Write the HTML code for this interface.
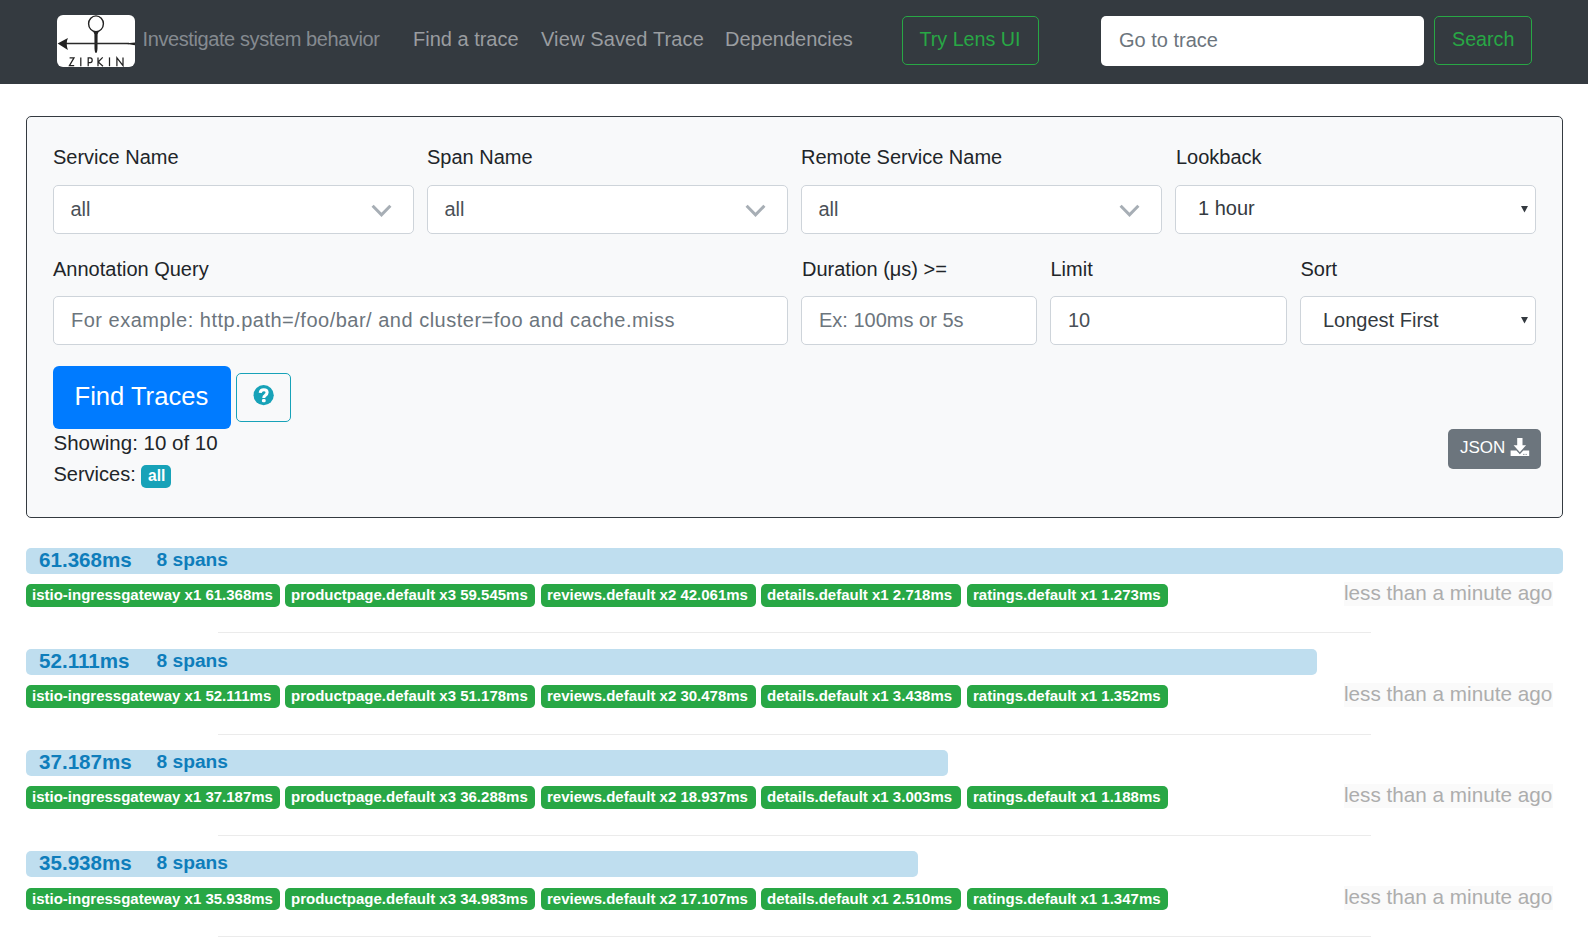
<!DOCTYPE html>
<html><head><meta charset="utf-8">
<style>
*{box-sizing:border-box;margin:0;padding:0}
html,body{width:1588px;height:944px;overflow:hidden;background:#fff}
body{font-family:"Liberation Sans",sans-serif;position:relative;color:#212529}
.a{position:absolute;white-space:nowrap;line-height:1}
.t20{font-size:20px}
#hdr{position:absolute;left:0;top:0;width:1588px;height:84px;background:#343a40}
.nav{color:#9a9da0;font-size:20px}
.gbtn{position:absolute;border:1px solid #28a745;border-radius:5px}
.gtxt{color:#28a745;font-size:20px}
#panel{position:absolute;left:26px;top:116px;width:1537px;height:402px;background:#f8f9fa;border:1px solid #343a40;border-radius:5px}
.lbl{font-size:20px;color:#212529}
.fc{position:absolute;background:#fff;border:1px solid #ced4da;border-radius:5px;height:49px}
.val{font-size:20px;color:#495057}
.ph{font-size:20px;color:#6c757d}
.bar{position:absolute;left:26px;height:26px;background:#bfdeef;border-radius:5px}
.dur{font-size:20px;font-weight:bold;color:#0e7dbb}
.bd{position:absolute;height:23px;background:#28a745;border-radius:5px}
.bdt{font-size:15px;font-weight:bold;color:#fff}
.ago{position:absolute;left:1344px;width:209px;height:24px;background:#fafafa}
.agot{font-size:20px;color:#adadad}
.hr{position:absolute;left:218px;width:1153px;height:1px;background:#ebebeb}
</style></head>
<body>
<div id="hdr">
  <svg style="position:absolute;left:57px;top:15px" width="78" height="52" viewBox="0 0 78 52">
    <rect x="0" y="0" width="78" height="52" rx="6" fill="#fff"/>
    <ellipse cx="39" cy="8.8" rx="7.4" ry="7.9" fill="none" stroke="#222" stroke-width="1.4"/>
    <path d="M35.8 15.6 Q39 18.2 42.2 15.6 L40.6 19.2 L40.5 33.5 Q40.2 38 39 38 Q37.8 38 37.5 33.5 L37.4 19.2 Z" fill="#222"/>
    <path d="M4 28.4 L72 28.4" stroke="#2a2a2a" stroke-width="1.55"/>
    <path d="M0.6 28.4 L10.9 23 Q8.6 28.4 10.9 35.1 Z" fill="#222"/>
    <path d="M67 28.6 L78 27.4 L78 30.2 Z" fill="#222"/>
    <g fill="none" stroke="#222" stroke-width="1.25" stroke-linejoin="miter">
      <path d="M12.6 42.9 L17 42.9 L12.4 50.6 L17.2 50.6"/>
      <path d="M23.8 42.4 L23.8 51.2"/>
      <path d="M31.2 51.2 L31.2 42.9 L33.2 42.9 Q35.2 42.9 35.2 45.2 Q35.2 47.5 33.2 47.5 L31.2 47.5"/>
      <path d="M41 42.4 L41 51.2 M45.7 42.4 L41.2 47 L46 51.2"/>
      <path d="M52.5 42.4 L52.5 51.2"/>
      <path d="M59.9 51.2 L59.9 42.8 L66 50.6 L66 42.4"/>
    </g>
  </svg>
  <span class="a nav" style="left:142.5px;top:29px;color:#858a90;font-size:20px;letter-spacing:-0.4px">Investigate system behavior</span>
  <span class="a nav" style="left:413px;top:29px">Find a trace</span>
  <span class="a nav" style="left:541px;top:29px;letter-spacing:0.13px">View Saved Trace</span>
  <span class="a nav" style="left:725px;top:29px">Dependencies</span>
  <div class="gbtn" style="left:902px;top:16px;width:137px;height:49px"></div>
  <span class="a gtxt" style="left:919.5px;top:30px;font-size:19.7px">Try Lens UI</span>
  <div style="position:absolute;left:1101px;top:16px;width:323px;height:50px;background:#fff;border-radius:5px"></div>
  <span class="a ph" style="left:1119px;top:30px">Go to trace</span>
  <div class="gbtn" style="left:1434px;top:16px;width:98px;height:49px"></div>
  <span class="a gtxt" style="left:1452px;top:30px;font-size:19.7px">Search</span>
</div>

<div id="panel"></div>
<span class="a lbl" style="left:53px;top:147px">Service Name</span>
<span class="a lbl" style="left:427px;top:147px">Span Name</span>
<span class="a lbl" style="left:801px;top:147px">Remote Service Name</span>
<span class="a lbl" style="left:1176px;top:147px">Lookback</span>

<div class="fc" style="left:53px;top:185px;width:361px"></div>
<span class="a val" style="left:70.5px;top:199px">all</span>
<svg class="a" style="left:371px;top:204px" width="21" height="14" viewBox="0 0 21 14"><path d="M1.6 1.8 L10.5 10.9 L19.4 1.8" fill="none" stroke="#a7aeb5" stroke-width="3"/></svg>
<div class="fc" style="left:427px;top:185px;width:361px"></div>
<span class="a val" style="left:444.5px;top:199px">all</span>
<svg class="a" style="left:745px;top:204px" width="21" height="14" viewBox="0 0 21 14"><path d="M1.6 1.8 L10.5 10.9 L19.4 1.8" fill="none" stroke="#a7aeb5" stroke-width="3"/></svg>
<div class="fc" style="left:801px;top:185px;width:361px"></div>
<span class="a val" style="left:818.5px;top:199px">all</span>
<svg class="a" style="left:1119px;top:204px" width="21" height="14" viewBox="0 0 21 14"><path d="M1.6 1.8 L10.5 10.9 L19.4 1.8" fill="none" stroke="#a7aeb5" stroke-width="3"/></svg>
<div class="fc" style="left:1175px;top:185px;width:361px"></div>
<span class="a val" style="left:1198px;top:197.5px;color:#343a40">1 hour</span>
<svg class="a" style="left:1520px;top:205px" width="9" height="8" viewBox="0 0 9 8"><path d="M1 1 L8 1 L4.5 7.5 Z" fill="#343a40"/></svg>

<span class="a lbl" style="left:53px;top:259px">Annotation Query</span>
<span class="a lbl" style="left:802px;top:259px">Duration (μs) &gt;=</span>
<span class="a lbl" style="left:1050.5px;top:259px">Limit</span>
<span class="a lbl" style="left:1300.5px;top:259px">Sort</span>

<div class="fc" style="left:53px;top:296px;width:735px"></div>
<span class="a ph" style="left:71px;top:310px;letter-spacing:0.5px">For example: http.path=/foo/bar/ and cluster=foo and cache.miss</span>
<div class="fc" style="left:801px;top:296px;width:236px"></div>
<span class="a ph" style="left:819px;top:310px">Ex: 100ms or 5s</span>
<div class="fc" style="left:1050px;top:296px;width:237px"></div>
<span class="a val" style="left:1068px;top:310px">10</span>
<div class="fc" style="left:1300px;top:296px;width:236px"></div>
<span class="a val" style="left:1323px;top:310px;color:#343a40">Longest First</span>
<svg class="a" style="left:1520px;top:316px" width="9" height="8" viewBox="0 0 9 8"><path d="M1 1 L8 1 L4.5 7.5 Z" fill="#343a40"/></svg>

<div style="position:absolute;left:53px;top:366px;width:178px;height:63px;background:#007bff;border-radius:6px"></div>
<span class="a" style="left:74.5px;top:383.5px;font-size:25.6px;color:#fff">Find Traces</span>
<div style="position:absolute;left:236px;top:373px;width:55px;height:49px;border:1px solid #17a2b8;border-radius:5px"></div>
<svg class="a" style="left:253px;top:385px" width="21" height="21" viewBox="0 0 21 21"><circle cx="10.65" cy="10.2" r="10.1" fill="#17a2b8"/><path d="M7.2 7.9 Q7.6 4.8 10.8 4.8 Q14.1 4.8 14.1 7.6 Q14.1 9.5 12.1 10.5 Q10.8 11.2 10.8 12.9" fill="none" stroke="#fff" stroke-width="3.1"/><rect x="8.9" y="14.1" width="3.8" height="3.2" rx="1.4" fill="#fff"/></svg>
<span class="a lbl" style="left:53.5px;top:433px;font-size:20.5px">Showing: 10 of 10</span>
<span class="a lbl" style="left:53.5px;top:464px">Services:</span>
<div style="position:absolute;left:141px;top:465px;width:30px;height:23px;background:#17a2b8;border-radius:5px"></div>
<span class="a" style="left:148px;top:468px;font-size:15.6px;font-weight:bold;color:#fff">all</span>
<div style="position:absolute;left:1448px;top:429px;width:93px;height:40px;background:#6c757d;border-radius:5px"></div>
<span class="a" style="left:1460px;top:439px;font-size:17px;color:#fff">JSON</span>
<svg class="a" style="left:1510px;top:438px" width="20" height="19" viewBox="0 0 20 19"><path d="M7.2 0 H12.5 V7.2 H16.1 L9.85 14.3 L3.6 7.2 H7.2 Z" fill="#fff"/><path d="M0.6 12.6 H6.4 L9.85 16.2 L13.3 12.6 H19.2 V18.1 H0.6 Z" fill="#fff"/><rect x="13.1" y="15.9" width="0.9" height="1" fill="#8a9197"/><rect x="14.5" y="15.9" width="0.9" height="1" fill="#8a9197"/><rect x="15.9" y="15.9" width="0.9" height="1" fill="#8a9197"/></svg>

<!-- rows -->
<div id="rows">
<div class="bar" style="top:548px;width:1537px"></div>
<span class="a dur" style="left:39px;top:549.6px;font-size:20.6px">61.368ms</span>
<span class="a dur" style="left:156.5px;top:550px;font-size:19.2px">8 spans</span>
<div class="bd" style="left:26px;top:584px;width:254px;height:23px"></div>
<span class="a bdt" style="left:32px;top:587px">istio-ingressgateway x1 61.368ms</span>
<div class="bd" style="left:285px;top:584px;width:250px;height:23px"></div>
<span class="a bdt" style="left:291px;top:587px">productpage.default x3 59.545ms</span>
<div class="bd" style="left:541px;top:584px;width:215px;height:23px"></div>
<span class="a bdt" style="left:547px;top:587px">reviews.default x2 42.061ms</span>
<div class="bd" style="left:761px;top:584px;width:200px;height:23px"></div>
<span class="a bdt" style="left:767px;top:587px">details.default x1 2.718ms</span>
<div class="bd" style="left:967px;top:584px;width:201px;height:23px"></div>
<span class="a bdt" style="left:973px;top:587px">ratings.default x1 1.273ms</span>
<div class="ago" style="top:582px"></div>
<span class="a agot" style="left:1344px;top:582.5px;font-size:20.7px">less than a minute ago</span>
<div class="hr" style="top:632px"></div>
<div class="bar" style="top:649px;width:1291px"></div>
<span class="a dur" style="left:39px;top:650.6px;font-size:20.6px">52.111ms</span>
<span class="a dur" style="left:156.5px;top:651px;font-size:19.2px">8 spans</span>
<div class="bd" style="left:26px;top:685px;width:254px;height:23px"></div>
<span class="a bdt" style="left:32px;top:688px">istio-ingressgateway x1 52.111ms</span>
<div class="bd" style="left:285px;top:685px;width:250px;height:23px"></div>
<span class="a bdt" style="left:291px;top:688px">productpage.default x3 51.178ms</span>
<div class="bd" style="left:541px;top:685px;width:215px;height:23px"></div>
<span class="a bdt" style="left:547px;top:688px">reviews.default x2 30.478ms</span>
<div class="bd" style="left:761px;top:685px;width:200px;height:23px"></div>
<span class="a bdt" style="left:767px;top:688px">details.default x1 3.438ms</span>
<div class="bd" style="left:967px;top:685px;width:201px;height:23px"></div>
<span class="a bdt" style="left:973px;top:688px">ratings.default x1 1.352ms</span>
<div class="ago" style="top:683px"></div>
<span class="a agot" style="left:1344px;top:683.5px;font-size:20.7px">less than a minute ago</span>
<div class="hr" style="top:734px"></div>
<div class="bar" style="top:750px;width:922px"></div>
<span class="a dur" style="left:39px;top:751.6px;font-size:20.6px">37.187ms</span>
<span class="a dur" style="left:156.5px;top:752px;font-size:19.2px">8 spans</span>
<div class="bd" style="left:26px;top:786px;width:254px;height:23px"></div>
<span class="a bdt" style="left:32px;top:789px">istio-ingressgateway x1 37.187ms</span>
<div class="bd" style="left:285px;top:786px;width:250px;height:23px"></div>
<span class="a bdt" style="left:291px;top:789px">productpage.default x3 36.288ms</span>
<div class="bd" style="left:541px;top:786px;width:215px;height:23px"></div>
<span class="a bdt" style="left:547px;top:789px">reviews.default x2 18.937ms</span>
<div class="bd" style="left:761px;top:786px;width:200px;height:23px"></div>
<span class="a bdt" style="left:767px;top:789px">details.default x1 3.003ms</span>
<div class="bd" style="left:967px;top:786px;width:201px;height:23px"></div>
<span class="a bdt" style="left:973px;top:789px">ratings.default x1 1.188ms</span>
<div class="ago" style="top:784px"></div>
<span class="a agot" style="left:1344px;top:784.5px;font-size:20.7px">less than a minute ago</span>
<div class="hr" style="top:835px"></div>
<div class="bar" style="top:851px;width:892px"></div>
<span class="a dur" style="left:39px;top:852.6px;font-size:20.6px">35.938ms</span>
<span class="a dur" style="left:156.5px;top:853px;font-size:19.2px">8 spans</span>
<div class="bd" style="left:26px;top:888px;width:254px;height:22px"></div>
<span class="a bdt" style="left:32px;top:891px">istio-ingressgateway x1 35.938ms</span>
<div class="bd" style="left:285px;top:888px;width:250px;height:22px"></div>
<span class="a bdt" style="left:291px;top:891px">productpage.default x3 34.983ms</span>
<div class="bd" style="left:541px;top:888px;width:215px;height:22px"></div>
<span class="a bdt" style="left:547px;top:891px">reviews.default x2 17.107ms</span>
<div class="bd" style="left:761px;top:888px;width:200px;height:22px"></div>
<span class="a bdt" style="left:767px;top:891px">details.default x1 2.510ms</span>
<div class="bd" style="left:967px;top:888px;width:201px;height:22px"></div>
<span class="a bdt" style="left:973px;top:891px">ratings.default x1 1.347ms</span>
<div class="ago" style="top:886px"></div>
<span class="a agot" style="left:1344px;top:886.5px;font-size:20.7px">less than a minute ago</span>
<div class="hr" style="top:936px"></div>
</div><!--/rows-->
</body></html>
